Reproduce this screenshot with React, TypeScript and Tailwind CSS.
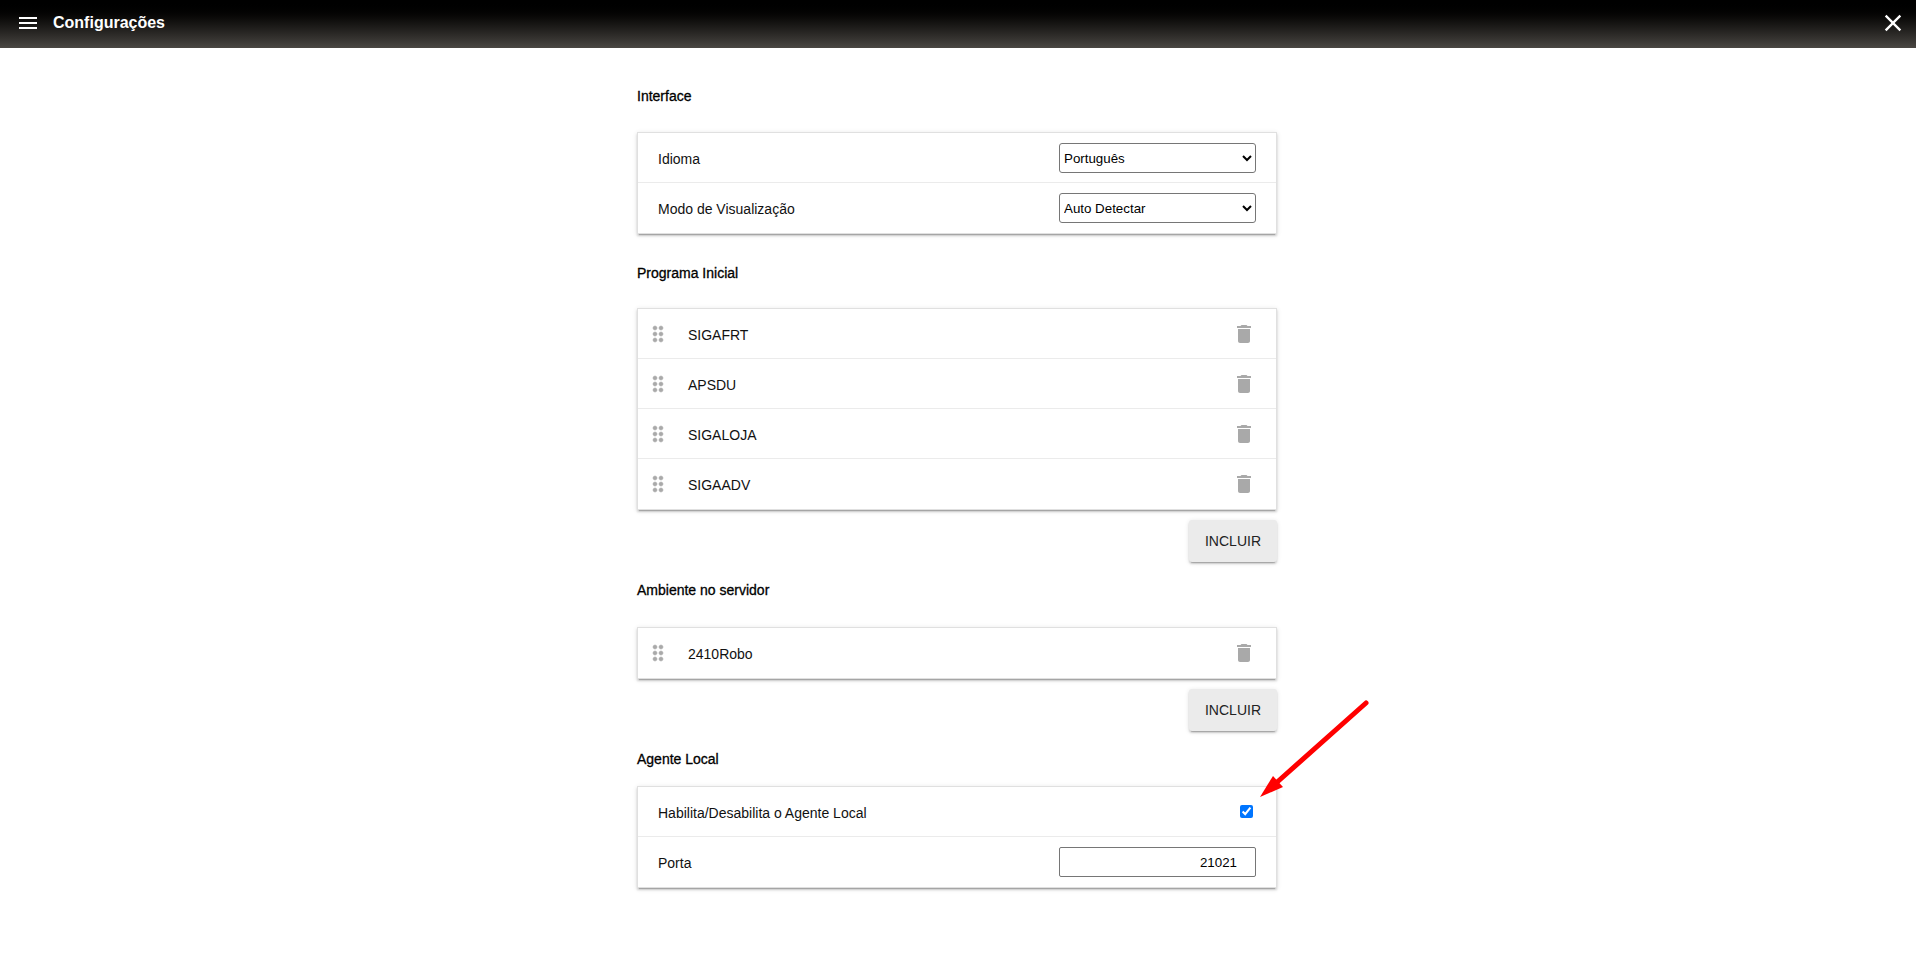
import React from "react";

function Drag() {
  return (
    <svg viewBox="0 0 24 24" className="w-6 h-6 fill-[#a9a9a9] stroke-[#a9a9a9] stroke-[0.5] shrink-0">
      <path d="M11 18c0 1.1-.9 2-2 2s-2-.9-2-2 .9-2 2-2 2 .9 2 2zm-2-8c-1.1 0-2 .9-2 2s.9 2 2 2 2-.9 2-2-.9-2-2-2zm0-6c-1.1 0-2 .9-2 2s.9 2 2 2 2-.9 2-2-.9-2-2-2zm6 4c1.1 0 2-.9 2-2s-.9-2-2-2-2 .9-2 2 .9 2 2 2zm0 2c-1.1 0-2 .9-2 2s.9 2 2 2 2-.9 2-2-.9-2-2-2zm0 6c-1.1 0-2 .9-2 2s.9 2 2 2 2-.9 2-2-.9-2-2-2z" />
    </svg>
  );
}

function Trash() {
  return (
    <svg viewBox="0 0 24 24" className="w-6 h-6 fill-[#a9a9a9] shrink-0">
      <path d="M6 19c0 1.1.9 2 2 2h8c1.1 0 2-.9 2-2V7H6v12zM19 4h-3.5l-1-1h-5l-1 1H5v2h14V4z" />
    </svg>
  );
}

function Card({ children }: { children: React.ReactNode }) {
  return (
    <div className="bg-white border border-[#e0e0e0] shadow-[0_3px_1px_-2px_rgba(0,0,0,0.2),0_2px_2px_0_rgba(0,0,0,0.14),0_1px_5px_0_rgba(0,0,0,0.12)] divide-y divide-[#ebebeb]">
      {children}
    </div>
  );
}

function Heading({ children, className }: { children: React.ReactNode; className: string }) {
  return <h2 className={`text-[14px] leading-5 font-normal text-black [-webkit-text-stroke:0.3px_black] ${className}`}>{children}</h2>;
}

function Row({ label, children }: { label: string; children: React.ReactNode }) {
  return (
    <div className="h-[50px] flex items-center justify-between pl-5 pr-5 text-[14px] text-[#111]">
      <span className="pt-[3px]">{label}</span>
      {children}
    </div>
  );
}

function SelectBox({ options }: { options: string[] }) {
  return (
    <select
      defaultValue={options[0]}
      className="w-[197px] h-[30px] bg-white border border-[#767676] rounded-[3px] text-[13.33px] text-black pt-[1px]"
    >
      {options.map((o) => (
        <option key={o}>{o}</option>
      ))}
    </select>
  );
}

function DragRow({ label }: { label: string }) {
  return (
    <div className="h-[50px] flex items-center pl-[8px] pr-5 text-[14px] text-[#111]">
      <Drag />
      <span className="ml-[18px] flex-1 pt-[3px]">{label}</span>
      <Trash />
    </div>
  );
}

function AddButton({ className }: { className: string }) {
  return (
    <div className={`flex justify-end ${className}`}>
      <button className="w-[88px] h-[42px] bg-[#ebebeb] rounded-[3px] text-[14px] text-[#222] shadow-[0_3px_1px_-2px_rgba(0,0,0,0.2),0_2px_2px_0_rgba(0,0,0,0.14),0_1px_5px_0_rgba(0,0,0,0.12)]">
        INCLUIR
      </button>
    </div>
  );
}

export default function App() {
  return (
    <div className="relative min-h-[955px] bg-white font-['Liberation_Sans',Arial,sans-serif]">
      <header className="h-12 flex items-center justify-between bg-gradient-to-b from-[#000000] to-[#4a4743] text-white">
        <div className="flex items-center pl-4">
          <svg viewBox="0 0 24 24" className="w-6 h-6 fill-white -translate-y-[1px]">
            <path d="M3 18h18v-2H3v2zm0-5h18v-2H3v2zm0-7v2h18V6H3z" />
          </svg>
          <span className="ml-[13px] text-[16px] font-bold -translate-y-[1px]">Configurações</span>
        </div>
        <svg viewBox="0 0 24 24" className="w-7 h-7 fill-white mr-[9px] -translate-y-[1px]">
          <path d="M19 6.41 17.59 5 12 10.59 6.41 5 5 6.41 10.59 12 5 17.59 6.41 19 12 13.41 17.59 19 19 17.59 13.41 12z" />
        </svg>
      </header>

      <main className="w-[640px] ml-[637px]">
        <Heading className="pt-[38px] pb-[26px]">Interface</Heading>
        <Card>
          <Row label="Idioma">
            <SelectBox options={["Português"]} />
          </Row>
          <Row label="Modo de Visualização">
            <SelectBox options={["Auto Detectar"]} />
          </Row>
        </Card>

        <Heading className="pt-[29px] pb-[25px]">Programa Inicial</Heading>
        <Card>
          <DragRow label="SIGAFRT" />
          <DragRow label="APSDU" />
          <DragRow label="SIGALOJA" />
          <DragRow label="SIGAADV" />
        </Card>
        <AddButton className="mt-[10px]" />

        <Heading className="pt-[18px] pb-[27px]">Ambiente no servidor</Heading>
        <Card>
          <DragRow label="2410Robo" />
        </Card>
        <AddButton className="mt-[10px]" />

        <Heading className="pt-[18px] pb-[17px]">Agente Local</Heading>
        <Card>
          <Row label="Habilita/Desabilita o Agente Local">
            <input type="checkbox" defaultChecked className="w-[13px] h-[13px] mr-[3px]" />
          </Row>
          <Row label="Porta">
            <input
              defaultValue="21021"
              className="w-[197px] h-[30px] bg-white border border-[#767676] rounded-[2px] text-[13.33px] text-black text-right pr-[18px]"
            />
          </Row>
        </Card>
      </main>

      <svg className="absolute left-[1250px] top-[695px] w-[125px] h-[110px]" viewBox="1250 695 125 110">
        <line x1="1366" y1="703" x2="1275" y2="784" stroke="#ff0000" strokeWidth="5" strokeLinecap="round" />
        <polygon points="1260,797 1273,776 1283,787" fill="#ff0000" />
      </svg>
    </div>
  );
}
